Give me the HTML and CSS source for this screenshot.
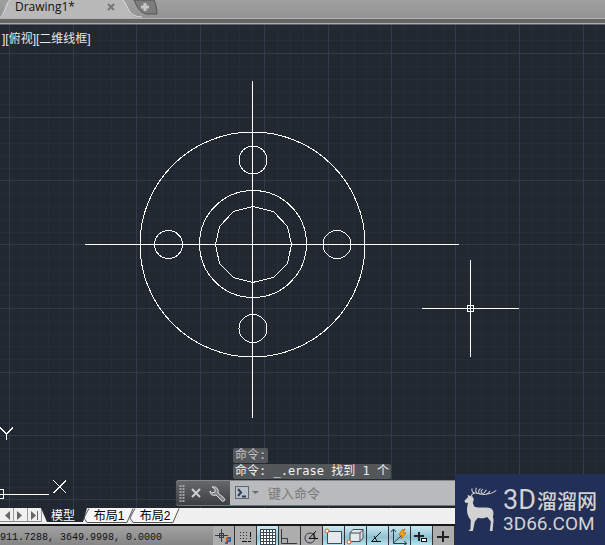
FILE: index.html
```html
<!DOCTYPE html>
<html lang="zh-CN">
<head>
<meta charset="utf-8">
<meta name="viewport" content="width=device-width, initial-scale=1">
<title>Drawing1*</title>
<link rel="stylesheet" href="styles.css">
</head>
<body>
<header class="files">
  <div class="file-tab">
    <svg class="file-shape" viewBox="0 0 160 18" aria-hidden="true">
      <path class="tab-face" d="M0 18C5 16 5 4 10 0H123C129 7 128 18 142 18Z"/>
      <path class="tab-edge" d="M0 17C5 15 5 4 10 0M123 0C129 7 128 17 142 17"/>
      <path class="plus-face" d="M134 0H154C156 4 157 9 157 14H147C140 13 137 7 134 0Z"/>
      <path class="plus-sign" d="M145 3V11M141 7H149"/>
    </svg>
    <span class="file-name">Drawing1*</span>
    <button class="bare file-close" aria-label="关闭">
      <svg width="8" height="8" viewBox="0 0 8 8"><path d="M1 1L7 7M7 1L1 7"/></svg>
    </button>
    <button class="bare file-new" aria-label="新建"></button>
  </div>
</header>

<main class="canvas">
  <svg class="drawing" aria-hidden="true">
    <defs>
      <pattern id="grid" width="255" height="255" patternUnits="userSpaceOnUse" x="9" y="28">
        <path class="minor" d="M13.5 0V255M26.5 0V255M39.5 0V255M51.5 0V255M77.5 0V255M90.5 0V255M102.5 0V255M115.5 0V255M140.5 0V255M153.5 0V255M166.5 0V255M179.5 0V255M204.5 0V255M217.5 0V255M230.5 0V255M242.5 0V255"/>
        <path class="minor" d="M0 13.5H255M0 26.5H255M0 38.5H255M0 51.5H255M0 77.5H255M0 90.5H255M0 102.5H255M0 115.5H255M0 140.5H255M0 153.5H255M0 166.5H255M0 179.5H255M0 204.5H255M0 217.5H255M0 230.5H255M0 242.5H255"/>
        <path class="major" d="M.5 0V255M64.5 0V255M127.5 0V255M191.5 0V255M0 .5H255M0 64.5H255M0 127.5H255M0 191.5H255"/>
      </pattern>
    </defs>
    <rect width="100%" height="100%" fill="url(#grid)"/>
    <g class="lines" transform="translate(0 -25)">
      <path d="M252.5 81V418M85 244.5H459"/>
      <circle cx="252.5" cy="244.5" r="112.5"/>
      <circle cx="253" cy="244" r="53.5"/>
      <path d="M252.5 206.5L273.5 211.5L287.5 226.5L291.5 244.5L287.5 263.5L273.5 277.5L252.5 282.5L233.5 277.5L219.5 263.5L215.5 244.5L219.5 226.5L233.5 211.5Z"/>
      <circle cx="253" cy="160" r="14"/>
      <circle cx="168.5" cy="244.5" r="14"/>
      <circle cx="337" cy="244.5" r="14"/>
      <circle cx="253" cy="328.5" r="14"/>
      <path d="M470.5 260V357M422 308.5H519M467.5 305.5H473.5V311.5H467.5Z"/>
      <path d="M0 494.5H49M0 489.5H3.5V498.5H0"/>
      <path d="M53.5 480.5L66 493M66 480.5L53.5 493M0 427.5L6.5 434L13 427.5M6.5 434V440"/>
    </g>
  </svg>
  <p class="view-label">][俯视][二维线框]</p>

  <section class="command">
    <p class="history dim">命令:</p>
    <p class="history">命令: _.erase 找到 1 个</p>
    <div class="prompt">
      <div class="grip">
        <svg width="50" height="26" viewBox="0 0 50 26" aria-hidden="true">
          <path class="dots" d="M4.5 4V22M7.5 4V22"/>
          <path class="cross" d="M16 8L24 16M24 8L16 16"/>
          <path class="wrench" d="M36 6L39 8V11L36 12L34 10C34 14 37 15 40 14L46 20C48 21 50 19 48 17L42 12C43 8 40 5 36 6Z"/>
        </svg>
      </div>
      <label class="entry">
        <svg width="26" height="16" viewBox="0 0 26 16" aria-hidden="true">
          <rect class="shell" x="1.5" y="1.5" width="13" height="12"/>
          <path class="shell-mark" d="M4 4L7 7.5L4 11M8 11.5H12"/>
          <path class="drop" d="M18 6H25L21.5 9Z"/>
        </svg>
        <input type="text" placeholder="键入命令" aria-label="键入命令">
      </label>
    </div>
  </section>
</main>

<nav class="layouts">
  <button class="bare step" aria-label="上一个"><svg width="13" height="16" viewBox="0 0 13 16"><path d="M10 3V12L5 7.5Z"/></svg></button>
  <button class="bare step" aria-label="下一个"><svg width="13" height="16" viewBox="0 0 13 16"><path d="M3 3V12L8 7.5Z"/></svg></button>
  <button class="bare step" aria-label="最后"><svg width="13" height="16" viewBox="0 0 13 16"><path d="M3 3V12L8 7.5ZM9 3H10V12H9Z"/></svg></button>
  <button class="bare sheet active">
    <svg class="sheet-shape" width="50" height="16" viewBox="0 0 50 16" aria-hidden="true"><path class="sheet-dark" d="M-1 0L5 14H41L45 0Z"/></svg>
    <span>模型</span>
  </button>
  <button class="bare sheet">
    <svg class="sheet-shape" width="50" height="16" viewBox="0 0 50 16" aria-hidden="true"><path class="sheet-light" d="M1 .5C-1 4 -3 8 -4 10L-1 14.5H39L45 .5"/></svg>
    <span>布局1</span>
  </button>
  <button class="bare sheet">
    <svg class="sheet-shape" width="50" height="16" viewBox="0 0 50 16" aria-hidden="true"><path class="sheet-light" d="M1 .5C-1 4 -3 8 -4 10L-1 14.5H39L45 .5"/></svg>
    <span>布局2</span>
  </button>
</nav>

<footer class="status">
  <output class="coords">911.7288, 3649.9998, 0.0000</output>
  <div class="modes">
    <button class="bare mode" aria-label="推断约束"><svg viewBox="0 0 21 18"><path class="slate" d="M2 8.5H15M8.5 2V15"/><rect class="slate" x="6.5" y="6.5" width="4" height="4"/><path class="orange" d="M14 17V11"/><path class="blue" d="M12 16H15M14 11H17V14H14"/></svg></button>
    <button class="bare mode" aria-label="捕捉模式"><svg viewBox="0 0 21 18"><path class="dotted" d="M5 5.5H14M5 8.5H14M5 11.5H14"/><path class="ink" d="M15.5 5V12M7 14.5H16" stroke-dasharray="5 1"/></svg></button>
    <button class="bare mode on" aria-label="栅格显示"><svg viewBox="0 0 21 18"><path class="mesh" d="M3 2H18V17H3Z"/><path class="mesh-line" d="M3.5 2V17M6.5 2V17M9.5 2V17M12.5 2V17M15.5 2V17M18.5 2V17M3 2.5H19M3 5.5H19M3 8.5H19M3 11.5H19M3 14.5H19M3 17.5H19"/></svg></button>
    <button class="bare mode" aria-label="正交模式"><svg viewBox="0 0 21 18"><path class="slate" d="M2.5 2V16.5H18M3 11.5H8.5V16"/></svg></button>
    <button class="bare mode" aria-label="极轴追踪"><svg viewBox="0 0 21 18"><circle class="slate" cx="9" cy="11" r="5"/><path class="ink" d="M8 11.5H17M8 11.5L15 4M13 6V12"/></svg></button>
    <button class="bare mode on" aria-label="对象捕捉"><svg viewBox="0 0 21 18"><rect class="panel" x="4.5" y="4.5" width="14" height="12"/><circle class="orange ring" cx="4" cy="4" r="2"/></svg></button>
    <button class="bare mode on" aria-label="三维对象捕捉"><svg viewBox="0 0 21 18"><path class="panel" d="M5 6L8 2.5H18V11L15 14.5H5ZM5 6H15V14.5M15 6L18 2.5"/><circle class="orange ring" cx="4" cy="15" r="2"/></svg></button>
    <button class="bare mode on" aria-label="对象捕捉追踪"><svg viewBox="0 0 21 18"><path class="ink" d="M14 5L4.5 14.5H14M7 9L10 14"/></svg></button>
    <button class="bare mode on" aria-label="动态 UCS"><svg viewBox="0 0 21 18"><path class="slate" d="M4.5 3V16.5H17M4.5 16L13 8M2 5L4.5 2L7 5M15 14L18 16.5L15 18"/><path class="bolt" d="M13 3L10 8H13L12 12L17 6H14L16 2Z"/></svg></button>
    <button class="bare mode on" aria-label="动态输入"><svg viewBox="0 0 21 18"><path class="thick" d="M3 9H13M8 5V14"/><rect class="ink white" x="10.5" y="11.5" width="5" height="3"/></svg></button>
    <button class="bare mode" aria-label="线宽"><svg viewBox="0 0 21 18"><path class="thick" d="M4 10H16M10 4V15"/></svg></button>
  </div>
</footer>

<aside class="brand">
  <svg class="deer" viewBox="12 20 100 132" aria-hidden="true">
    <path class="coat" d="M13 60L24 49L22 43L32 46L37 48L41 56L38 66L42 77C54 84 77 76 92 83C99 88 100 96 97 107L99 116L96 149H88L91 121L80 108C70 113 62 112 53 110L44 121L38 149H25L31 144L32 117C22 105 17 91 24 67L16 66Z"/>
    <path class="antler" d="M33 47C35 38 45 35 55 39S73 37 78 28M43 38C35 35 34 29 36 24M50 37C45 32 46 27 49 22M57 39C53 34 55 28 61 25M64 38C61 34 62 30 68 26M55 40C75 44 94 40 107 30M76 41C84 39 87 35 88 31"/>
  </svg>
  <div class="brand-text">
    <p class="brand-name"><span class="brand-latin">3D</span><span>溜溜网</span></p>
    <p class="brand-site">3D66.COM</p>
  </div>
</aside>
</body>
</html>
```

FILE: styles.css
```css
* { box-sizing: border-box; }
html, body { height: 100%; }
body {
  margin: 0;
  position: relative;
  display: flex;
  flex-direction: column;
  overflow: hidden;
  background: #222830;
  font: 12px/16px "Liberation Sans", "Noto Sans CJK SC", sans-serif;
}
p { margin: 0; }
.bare { border: 0; padding: 0; margin: 0; background: none; color: inherit; font: inherit; }
svg { display: block; }

.files {
  flex: none;
  height: 25px;
  background: linear-gradient(#a0a0a0 0, #939393 18px, #b4b4b4 18px, #b4b4b4 19px, #656565 19px, #656565 23px, #adadad 23px, #adadad 24px, #606467 24px);
}
.file-tab { position: relative; display: flex; height: 16px; padding-left: 15px; color: #111; }
.file-shape { position: absolute; left: 0; top: 0; width: 160px; height: 18px; }
.tab-face { fill: #b9b9b9; }
.tab-edge { fill: none; stroke: #dedede; }
.plus-face { fill: #7c7c7c; stroke: #555; }
.plus-sign { stroke: #c8c8c8; stroke-width: 3; }
.file-name { position: relative; width: 92px; font: 12px/14px "Open Sans", sans-serif; }
.file-close { position: relative; width: 8px; height: 14px; }
.file-close path { fill: none; stroke: #777; stroke-width: 2; }
.file-new { position: relative; width: 20px; height: 14px; margin-left: 20px; }

.canvas { position: relative; flex: 1; min-height: 0; background: #222830; overflow: hidden; }
.drawing { position: absolute; left: 0; top: 0; width: 100%; height: 100%; shape-rendering: crispEdges; }
.minor { stroke: #262d3a; }
.major { stroke: #333a4b; }
.lines { fill: none; stroke: #fff; }
.view-label { position: relative; padding: 6px 0 0 2px; color: #e4e6e8; }

.command {
  position: absolute;
  left: 176px;
  right: 0;
  bottom: 2px;
  display: flex;
  flex-direction: column;
  align-items: flex-start;
}
.history {
  margin: 0 0 1px 57px;
  padding: 0 2px;
  border-radius: 2px;
  background: #54575a;
  color: #f2f2f2;
  font: 12px/15px "DejaVu Sans Mono", "Noto Sans CJK SC", monospace;
}
.dim { color: #c4c6c8; }
.prompt { display: flex; align-self: stretch; height: 26px; border-radius: 3px; border-top: 1px solid #85888b; border-bottom: 1px solid #737578; background: #b9babc; overflow: hidden; }
.grip { flex: none; width: 54px; background: linear-gradient(#66686b, #3c3e41); }
.dots { stroke: #a0a2a4; stroke-width: 2; stroke-dasharray: 2 1; }
.cross { stroke: #d0d0d0; stroke-width: 2; }
.wrench { fill: #7e8589; stroke: #dcdfe1; }
.entry { flex: 1; display: flex; align-items: center; gap: 8px; padding-left: 4px; }
.shell { fill: #b5c0cc; stroke: #5c6772; }
.shell-mark { fill: none; stroke: #333d47; stroke-width: 2; }
.drop { fill: #68696b; }
.entry input { flex: 1; min-width: 0; padding: 0; border: 0; outline: 0; background: none; font: 13px/18px "Noto Sans CJK SC", sans-serif; }
.entry input::placeholder { color: #77787a; opacity: 1; }

.layouts { flex: none; display: flex; height: 16px; background: #f0f0f0; color: #000; }
.step { width: 14px; height: 14px; border-right: 1px solid #999; border-bottom: 1px solid #888; }
.step path { fill: #666; }
.sheet { position: relative; width: 46px; height: 16px; padding-right: 4px; line-height: 16px; }
.sheet span { position: relative; }
.sheet-shape { position: absolute; left: 0; top: 0; overflow: visible; }
.sheet-dark { fill: #222830; }
.sheet-light { fill: #f7f7f7; stroke: #555; }
.active { z-index: 1; color: #fff; }

.status {
  flex: none;
  display: flex;
  height: 21px;
  border-top: 2px solid #15181b;
  background: linear-gradient(#a2a2a2, #858585);
  color: #111;
}
.coords { flex: none; width: 213px; padding-top: 6px; font: 10px/12px "Liberation Mono", monospace; }
.modes { display: flex; gap: 1px; padding-right: 1px; background: #333; }
.mode { width: 21px; background: #adadad; }
.mode svg { width: 21px; height: 18px; fill: none; }
.on { background: linear-gradient(#cdeaf2, #8fc3d3 60%, #b3e4ee); }
.ink { stroke: #111; }
.thick { stroke: #222; stroke-width: 2; }
.slate { stroke: #343b43; }
.dotted { stroke: #333; stroke-dasharray: 1 2; }
.mesh { fill: #fff; }
.mesh-line { stroke: #3c4650; }
.orange { stroke: #dc5420; stroke-width: 2; }
.blue { stroke: #2d63a8; stroke-width: 2; }
.ring { fill: #fff; stroke-width: 1; }
.panel { fill: #e5e9ed; stroke: #434d57; }
.bolt { fill: #f6b41f; stroke: #d2710e; }
.white { fill: #fff; }

.brand {
  position: absolute;
  right: 0;
  bottom: 0;
  width: 150px;
  height: 71px;
  display: flex;
  align-items: center;
  gap: 5px;
  padding-left: 9px;
  background: #222f56;
  color: #d2d2d2;
}
.deer { flex: none; width: 34px; height: 45px; }
.coat { fill: #d2d2d2; }
.antler { fill: none; stroke: #d2d2d2; stroke-width: 3; }
.brand-name { display: flex; white-space: nowrap; font: 500 20px/29px "Noto Sans CJK SC", sans-serif; }
.brand-latin { width: 34px; font: 27px/29px Roboto, sans-serif; }
.brand-site { font: 19px/18px Roboto, sans-serif; }
```
